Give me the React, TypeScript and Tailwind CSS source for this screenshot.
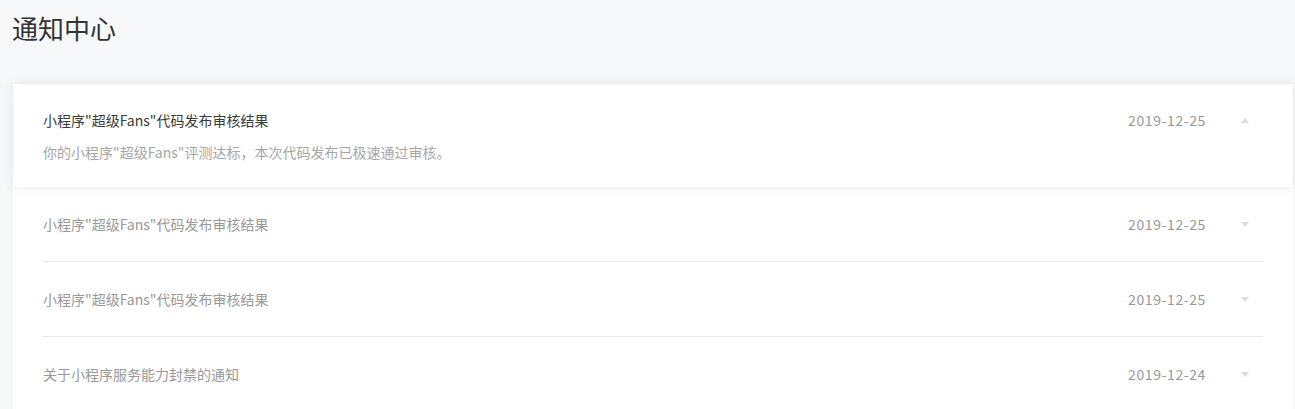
import React from "react";

const font = { fontFamily: '"Noto Sans CJK SC", "Noto Sans", sans-serif' };

function Caret({ up }: { up?: boolean }) {
  return (
    <svg width="8" height="5" viewBox="0 0 8 5" className="ml-[35px] mr-[14px] shrink-0">
      {up ? <path d="M0 5 L4 0 L8 5 Z" fill="#dcdcdc" /> : <path d="M0 0 L4 5 L8 0 Z" fill="#dcdcdc" />}
    </svg>
  );
}

const rows = [
  { title: '小程序"超级Fans"代码发布审核结果', date: "2019-12-25" },
  { title: '小程序"超级Fans"代码发布审核结果', date: "2019-12-25" },
  { title: "关于小程序服务能力封禁的通知", date: "2019-12-24" },
];

export default function App() {
  return (
    <div className="min-h-[409px] bg-[#f7f8fa] overflow-hidden" style={font}>
      <h1 className="pl-[12px] pt-[9px] text-[26px] leading-[38px] text-[#333333] font-normal">通知中心</h1>
      <div className="ml-[13px] mr-[2px] mt-[37px] bg-white">
        <div className="relative z-10 bg-white shadow-[0_0_12px_rgba(0,0,0,0.09)] px-[30px] pt-[25px] pb-[24px]">
          <div className="flex items-center h-[22px]">
            <div className="flex-1 text-[14px] text-[#3a3a3a]">小程序"超级Fans"代码发布审核结果</div>
            <div className="text-[14px] tracking-[0.6px] text-[#999999]">2019-12-25</div>
            <Caret up />
          </div>
          <div className="mt-[10px] text-[14px] leading-[22px] text-[#a6a6a6]">
            你的小程序"超级Fans"评测达标，本次代码发布已极速通过审核。
          </div>
        </div>
        <div className="px-[30px]">
          {rows.map((r, i) => (
            <div
              key={i}
              className={`flex items-center h-[75px] ${i < rows.length - 1 ? "border-b border-[#e8e8e8]" : ""}`}
            >
              <div className="flex-1 text-[14px] text-[#999999]">{r.title}</div>
              <div className="text-[14px] tracking-[0.6px] text-[#999999]">{r.date}</div>
              <Caret />
            </div>
          ))}
        </div>
      </div>
    </div>
  );
}
